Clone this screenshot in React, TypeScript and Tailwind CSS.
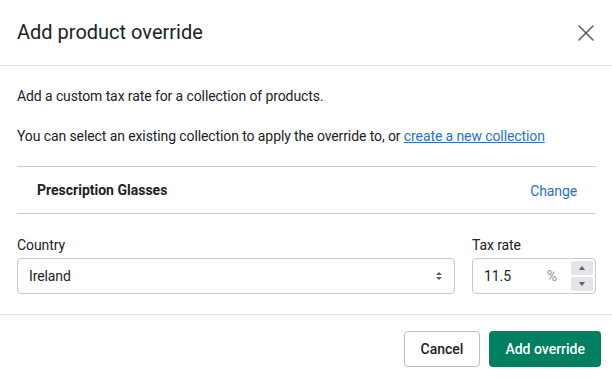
import React from 'react';
import { X } from 'lucide-react';

const App = () => {
  return (
    <div className="w-[612px] h-[378px] bg-white text-[#202223] overflow-hidden" style={{ fontFamily: 'Roboto, "Liberation Sans", sans-serif' }}>
      <div className="h-[66px] flex items-center justify-between pl-[17px] pr-[12px] border-b border-[#e1e3e5]">
        <h1 className="text-[20px] text-[#202223] -mt-[2px]">Add product override</h1>
        <X className="w-[28px] h-[28px] text-[#5c5f62]" strokeWidth={1.3} />
      </div>

      <div className="pl-[17px] pr-[16px] pt-[20px] tracking-[-0.1px]">
        <p className="text-[14px] leading-[20px]">Add a custom tax rate for a collection of products.</p>
        <p className="text-[14px] leading-[20px] mt-[20px]">
          You can select an existing collection to apply the override to, or{' '}
          <a href="#" className="text-[#2c6ecb] underline">create a new collection</a>
        </p>

        <div className="mt-[20px] h-[48px] border-y border-[#c9cccf] flex items-center justify-between pl-[20px] pr-[19px]">
          <span className="text-[14px] font-bold tracking-normal">Prescription Glasses</span>
          <span className="text-[14px] text-[#2c6ecb] mt-[2px]">Change</span>
        </div>

        <div className="mt-[21px] flex gap-[17px]">
          <div className="flex-1">
            <div className="text-[14px] leading-[20px] mb-[3px]">Country</div>
            <div className="h-[36px] border border-[#c9cccf] rounded-[4px] flex items-center justify-between pl-[11px] pr-[11px]">
              <span className="text-[14px]">Ireland</span>
              <svg width="8" height="12" viewBox="0 0 8 12" className="text-[#5c5f62]">
                <path d="M4 2 L7 5 H1 Z" fill="currentColor" />
                <path d="M4 10 L7 7 H1 Z" fill="currentColor" />
              </svg>
            </div>
          </div>
          <div className="w-[124px]">
            <div className="text-[14px] leading-[20px] mb-[3px]">Tax rate</div>
            <div className="h-[36px] border border-[#c9cccf] rounded-[4px] flex items-center pl-[11px] pr-[2px]">
              <span className="text-[14px] flex-1">11.5</span>
              <span className="text-[14px] text-[#8c9196] mr-[14px]">%</span>
              <div className="flex flex-col gap-[2px]">
                <div className="w-[22px] h-[14px] bg-[#e4e5e7] rounded-[2px] flex items-center justify-center">
                  <svg width="6" height="4" viewBox="0 0 6 4"><path d="M3 0 L6 4 H0 Z" fill="#5c5f62" /></svg>
                </div>
                <div className="w-[22px] h-[14px] bg-[#e4e5e7] rounded-[2px] flex items-center justify-center">
                  <svg width="6" height="4" viewBox="0 0 6 4"><path d="M3 4 L6 0 H0 Z" fill="#5c5f62" /></svg>
                </div>
              </div>
            </div>
          </div>
        </div>
      </div>

      <div className="mt-[20px] border-t border-[#e1e3e5] flex justify-end gap-[9px] pt-[16px] pr-[11px]">
        <button className="h-[36px] px-[16px] border border-[#babfc3] rounded-[4px] text-[14px] font-medium text-[#202223] bg-white">Cancel</button>
        <button className="h-[36px] px-[16px] rounded-[4px] text-[14px] font-medium text-white bg-[#008060]">Add override</button>
      </div>
    </div>
  );
};

export default App;
